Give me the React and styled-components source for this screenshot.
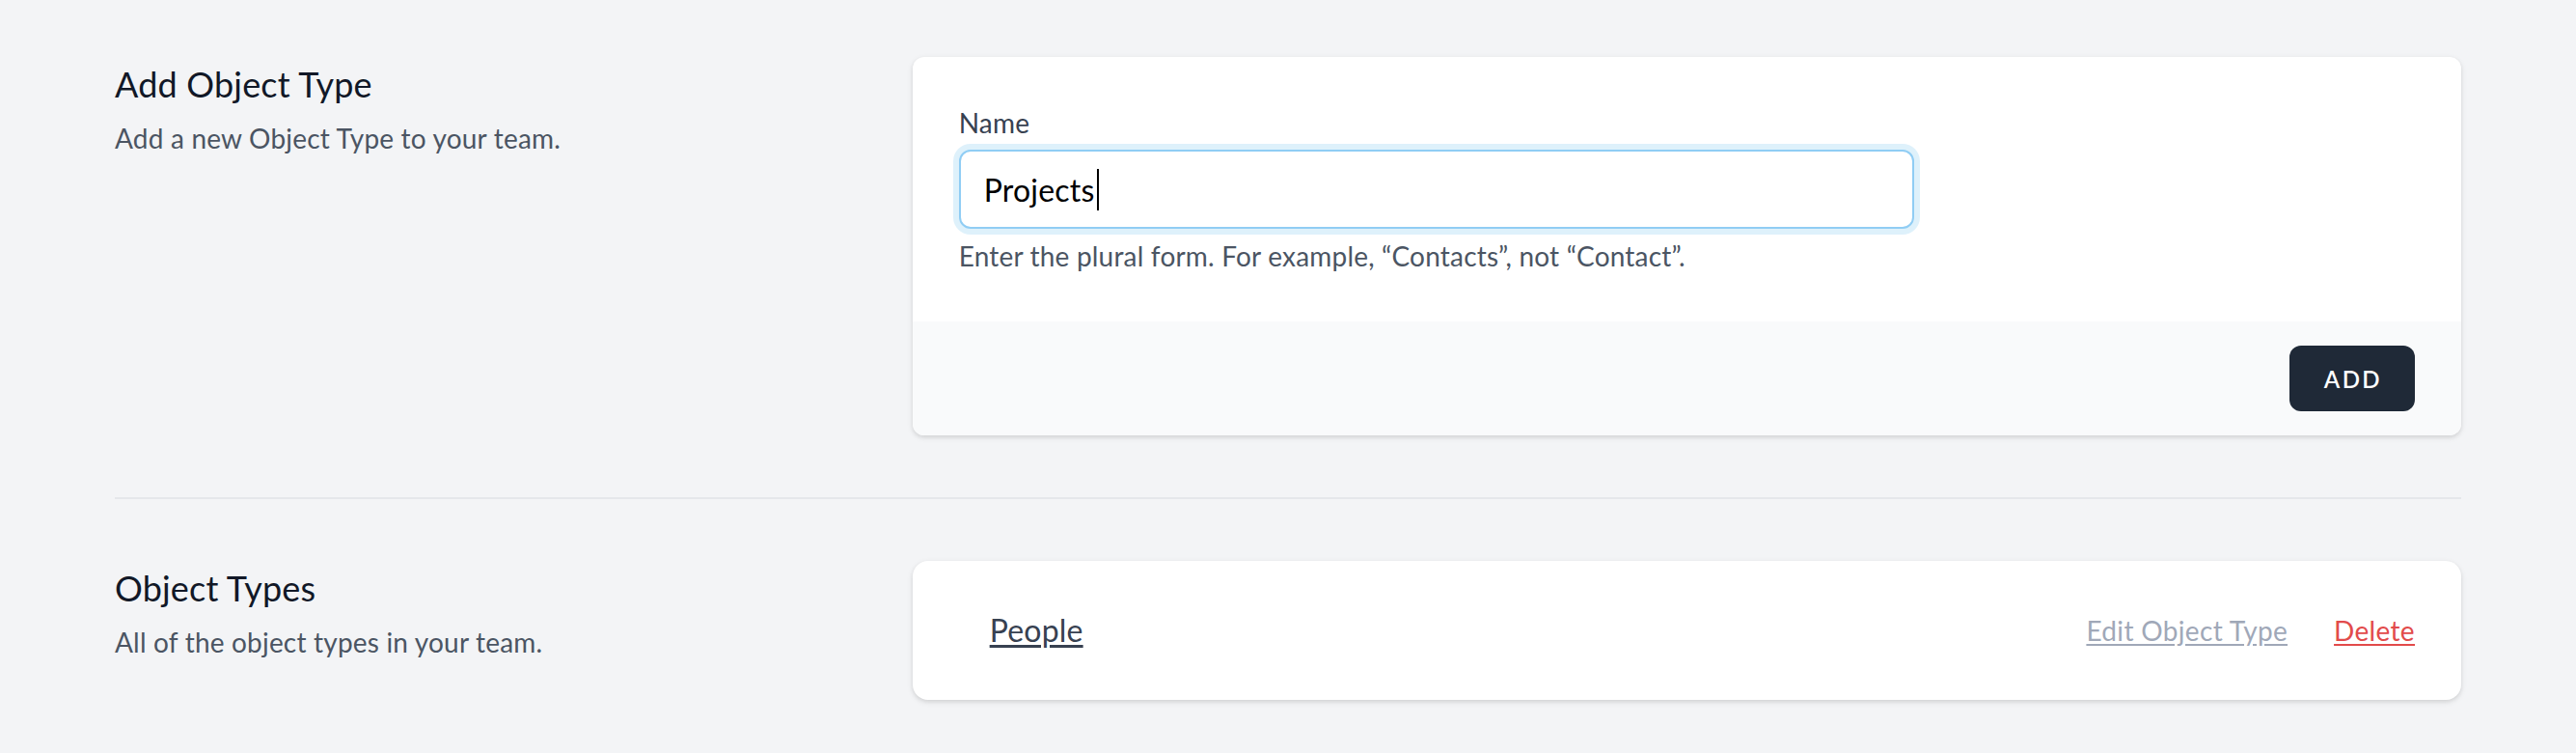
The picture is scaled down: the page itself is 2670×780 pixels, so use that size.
import React from "react";
import styled, { createGlobalStyle } from "styled-components";

const GlobalStyle = createGlobalStyle`
  html, body {
    margin: 0;
    padding: 0;
    background: #f3f4f6;
  }
  body {
    font-family: Lato, "Noto Sans", "Open Sans", sans-serif;
    letter-spacing: 0.012em;
    -webkit-font-smoothing: antialiased;
  }
`;

const Page = styled.div`
  max-width: 2432px;
  margin: 0 auto;
  padding-top: 59px;
  padding-bottom: 40px;
`;

const Section = styled.div`
  display: grid;
  grid-template-columns: repeat(3, 1fr);
  column-gap: 48px;
`;

const SectionTitle = styled.div`
  grid-column: span 1;
`;

const Heading = styled.h3`
  margin: 0;
  font-size: 36px;
  line-height: 56px;
  font-weight: 400;
  color: #111827;
`;

const Description = styled.p`
  margin: 8px 0 0;
  font-size: 28px;
  line-height: 40px;
  color: #4b5563;
`;

const Main = styled.div`
  grid-column: span 2;
`;

const Card = styled.div`
  background: #fff;
  border-radius: ${(props) => props.radius || "12px"};
  box-shadow: 0 2px 6px rgba(0, 0, 0, 0.1), 0 2px 4px rgba(0, 0, 0, 0.06);
  overflow: hidden;
`;

const CardBody = styled.div`
  padding: 48px;
`;

const FieldGrid = styled.div`
  display: grid;
  grid-template-columns: repeat(6, 1fr);
  column-gap: 48px;
`;

const Field = styled.div`
  grid-column: span 4;
`;

const Label = styled.label`
  display: block;
  font-size: 28px;
  line-height: 40px;
  font-weight: 400;
  color: #374151;
`;

const InputBox = styled.div`
  margin-top: 8px;
  box-sizing: border-box;
  height: 82px;
  display: flex;
  align-items: center;
  padding: 0 24px;
  border: 2px solid #90cdf4;
  border-radius: 12px;
  box-shadow: 0 0 0 6px rgba(190, 227, 248, 0.5);
  background: #fff;
  font-size: 32px;
  color: #000;
`;

const Caret = styled.span`
  display: inline-block;
  width: 2px;
  height: 43px;
  margin-left: 3px;
  background: #000;
`;

const Help = styled.p`
  margin: 8px 0 0;
  font-size: 28px;
  line-height: 40px;
  color: #4b5563;
`;

const CardFooter = styled.div`
  display: flex;
  justify-content: flex-end;
  padding: 25px 48px;
  background: #f9fafb;
`;

const Button = styled.button`
  height: 68px;
  padding: 0 34px 0 36px;
  border: none;
  border-radius: 12px;
  background: #1f2937;
  color: #fff;
  font-family: inherit;
  font-size: 24px;
  font-weight: 600;
  letter-spacing: 0.1em;
  text-transform: uppercase;
  cursor: pointer;
`;

const Divider = styled.div`
  margin: 64px 0;
  border-top: 2px solid #e5e7eb;
`;

const Row = styled.div`
  display: flex;
  align-items: center;
  justify-content: space-between;
  height: 48px;
`;

const ItemName = styled.a`
  margin-left: 32px;
  font-size: 32px;
  line-height: 48px;
  color: #374151;
  text-decoration: underline;
  text-underline-offset: 3px;
`;

const Actions = styled.div`
  display: flex;
  align-items: center;
  gap: 48px;
`;

const ActionLink = styled.button`
  border: none;
  background: none;
  padding: 0;
  font-family: inherit;
  font-size: 28px;
  line-height: 40px;
  letter-spacing: 0.012em;
  color: ${(props) => (props.danger ? "#e24b4b" : "#a0a8b8")};
  text-decoration: underline;
  text-underline-offset: 3px;
  cursor: pointer;
`;

const App = () => {
  return (
    <>
      <GlobalStyle />
      <Page>
        <Section>
          <SectionTitle>
            <Heading>Add Object Type</Heading>
            <Description>Add a new Object Type to your team.</Description>
          </SectionTitle>
          <Main>
            <Card>
              <CardBody>
                <FieldGrid>
                  <Field>
                    <Label>Name</Label>
                    <InputBox>
                      Projects
                      <Caret />
                    </InputBox>
                    <Help>
                      Enter the plural form. For example, “Contacts”, not
                      “Contact”.
                    </Help>
                  </Field>
                </FieldGrid>
              </CardBody>
              <CardFooter>
                <Button>Add</Button>
              </CardFooter>
            </Card>
          </Main>
        </Section>

        <Divider />

        <Section>
          <SectionTitle>
            <Heading>Object Types</Heading>
            <Description>All of the object types in your team.</Description>
          </SectionTitle>
          <Main>
            <Card radius="16px">
              <CardBody>
                <Row>
                  <ItemName href="#">People</ItemName>
                  <Actions>
                    <ActionLink>Edit Object Type</ActionLink>
                    <ActionLink danger>Delete</ActionLink>
                  </Actions>
                </Row>
              </CardBody>
            </Card>
          </Main>
        </Section>
      </Page>
    </>
  );
};

export default App;
